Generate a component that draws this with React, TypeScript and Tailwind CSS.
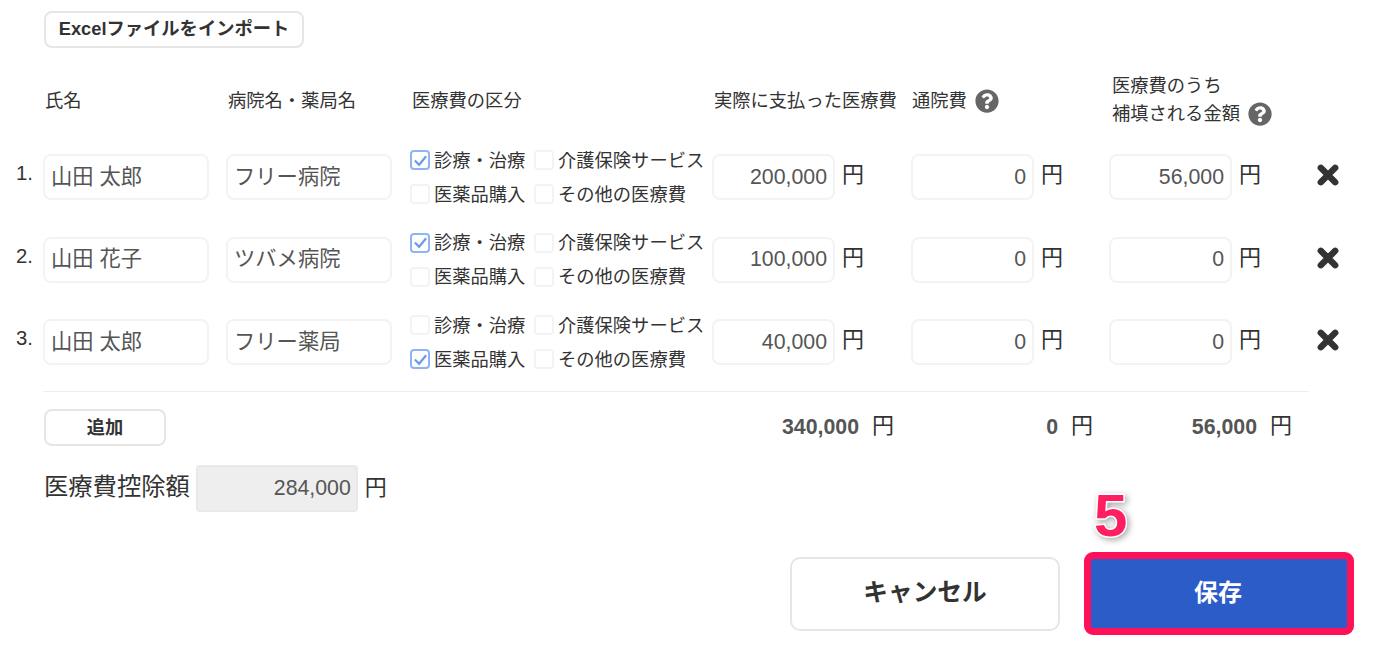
import React from "react";
import { FaQuestionCircle } from "react-icons/fa";

type Row = {
  no: number;
  name: string;
  hospital: string;
  checked: string;
  paid: string;
  transport: string;
  covered: string;
};

const rows: Row[] = [
  { no: 1, name: "山田 太郎", hospital: "フリー病院", checked: "診療・治療", paid: "200,000", transport: "0", covered: "56,000" },
  { no: 2, name: "山田 花子", hospital: "ツバメ病院", checked: "診療・治療", paid: "100,000", transport: "0", covered: "0" },
  { no: 3, name: "山田 太郎", hospital: "フリー薬局", checked: "医薬品購入", paid: "40,000", transport: "0", covered: "0" },
];

const gridCols = "grid grid-cols-[27px_183px_184px_302px_199px_198px_231px] pl-[16px]";

function Check({ label, checked }: { label: string; checked: boolean }) {
  return (
    <label className="flex h-[20px] items-center gap-[4px] whitespace-nowrap">
      <span
        className={
          "flex h-[20px] w-[20px] shrink-0 items-center justify-center rounded-[4px] border-2 " +
          (checked ? "border-[#8fb4f5]" : "border-[#f3f3f3]")
        }
      >
        {checked && (
          <svg viewBox="0 0 16 16" className="h-[15px] w-[15px]" fill="none" stroke="#6d9be8" strokeWidth="2.4">
            <path d="M2 8 L6.5 12.5 L14 3.5" />
          </svg>
        )}
      </span>
      <span className="pt-[1px]">{label}</span>
    </label>
  );
}

function TextBox({ value, right, width }: { value: string; right?: boolean; width: string }) {
  return (
    <input
      readOnly
      defaultValue={value}
      className={
        width +
        " h-[46px] rounded-[8px] border-2 border-[#f3f3f3] bg-white px-[6px] text-[21.3px] text-[#555] outline-none " +
        (right ? "text-right" : "pb-[6px] text-left")
      }
    />
  );
}

function Money({ value }: { value: string }) {
  return (
    <div className="flex items-center gap-[7px]">
      <TextBox value={value} right width="w-[123px]" />
      <span className="mb-[5px] text-[22px]">円</span>
    </div>
  );
}

function Total({ value, className }: { value: string; className: string }) {
  return (
    <div className={"flex items-center justify-end gap-[13px] " + className}>
      <span className="text-[21.3px] font-bold text-[#555]">{value}</span>
      <span className="mb-[4px] text-[22px]">円</span>
    </div>
  );
}

function RemoveIcon() {
  return (
    <svg viewBox="0 0 22 22" className="ml-auto mr-[1px] mt-[-4px] h-[22px] w-[22px]" fill="none" stroke="#333" strokeWidth="6.4" strokeLinecap="round">
      <path d="M3.8 3.8 L18.2 18.2 M18.2 3.8 L3.8 18.2" />
    </svg>
  );
}

export default function App() {
  return (
    <div className="relative h-[651px] w-[1378px] overflow-hidden bg-white pt-[11px] font-['Liberation_Sans','Noto_Sans_CJK_JP',sans-serif] text-[18.3px] text-[#333]">
      <button className="ml-[44px] h-[37px] w-[260px] rounded-[8px] border-2 border-[#e6e6e6] bg-white pb-[2px] text-[18.3px] font-bold text-[#333]">
        Excelファイルをインポート
      </button>

      <div className={gridCols + " mt-[24px] h-[56px] items-center"}>
        <div />
        <div className="pl-[2px] pt-[1px]">氏名</div>
        <div className="pl-[2px] pt-[1px]">病院名・薬局名</div>
        <div className="pl-[2px] pt-[1px]">医療費の区分</div>
        <div className="whitespace-nowrap pl-[2px] pt-[1px]">実際に支払った医療費</div>
        <div className="flex items-center gap-[8px] pl-[1px] pt-[2px]">
          <span className="pb-[1px]">通院費</span>
          <FaQuestionCircle className="text-[24px] text-[#666]" />
        </div>
        <div className="pl-[3px] leading-[28px]">
          <div>医療費のうち</div>
          <div className="flex items-center gap-[8px]">
            補填される金額
            <FaQuestionCircle className="text-[24px] text-[#666]" />
          </div>
        </div>
      </div>

      <div className="mt-[22px] flex flex-col gap-[27.5px]">
        {rows.map((r) => (
          <div key={r.no} className={gridCols + " h-[55px] items-start"}>
            <div className="pt-[11px] text-[20.3px] leading-[24px]">{r.no}.</div>
            <div className="pt-[4px]">
              <TextBox value={r.name} width="w-[166px]" />
            </div>
            <div className="pt-[4px]">
              <TextBox value={r.hospital} width="w-[166px]" />
            </div>
            <div className="grid grid-cols-[124px_auto] justify-start gap-y-[14px]">
              {["診療・治療", "介護保険サービス", "医薬品購入", "その他の医療費"].map((label) => (
                <Check key={label} label={label} checked={label === r.checked} />
              ))}
            </div>
            <div className="pt-[4px]">
              <Money value={r.paid} />
            </div>
            <div className="pt-[4px]">
              <Money value={r.transport} />
            </div>
            <div className="flex items-center pt-[4px]">
              <Money value={r.covered} />
              <RemoveIcon />
            </div>
          </div>
        ))}
      </div>

      <div className="ml-[43px] mr-[69px] mt-[21px] border-t border-[#eeeeee]" />

      <div className={gridCols + " mt-[17px] h-[37px] items-center"}>
        <div />
        <button className="ml-[1px] h-[37px] w-[122px] rounded-[8px] border-2 border-[#e6e6e6] bg-white text-[18.3px] font-bold">
          追加
        </button>
        <div />
        <div />
        <Total value="340,000" className="pr-[17px]" />
        <Total value="0" className="pr-[16px]" />
        <Total value="56,000" className="pr-[48px]" />
      </div>

      <div className="ml-[44px] mt-[19px] flex items-center">
        <span className="mb-[2px] text-[24.3px]">医療費控除額</span>
        <input
          readOnly
          defaultValue="284,000"
          className="ml-[6px] h-[47px] w-[162px] rounded-[4px] border-2 border-[#e9e9e9] bg-[#eeeeee] px-[5px] text-right text-[21.3px] text-[#555] outline-none"
        />
        <span className="mb-[2px] ml-[7px] text-[22px]">円</span>
      </div>

      <div className="mr-[24px] mt-[40px] flex items-center justify-end gap-[24px]">
        <button className="h-[74px] w-[270px] rounded-[10px] border-2 border-[#e6e6e6] bg-white pb-[1px] text-[24.7px] font-bold">
          キャンセル
        </button>
        <button className="h-[83px] w-[270px] rounded-[9px] border-[7px] border-[#ff1158] bg-[#2b5cc8] pb-[2px] pr-[2px] text-[24px] font-bold text-white">
          保存
        </button>
      </div>

      {/* callout number */}
      <span className="absolute left-[1094px] top-[481px] text-[60px] font-black leading-[70px] text-[#ff1f60] [-webkit-text-stroke:3px_white] [paint-order:stroke_fill] drop-shadow-[2px_2px_3px_rgba(0,0,0,0.35)]">
        5
      </span>
    </div>
  );
}
